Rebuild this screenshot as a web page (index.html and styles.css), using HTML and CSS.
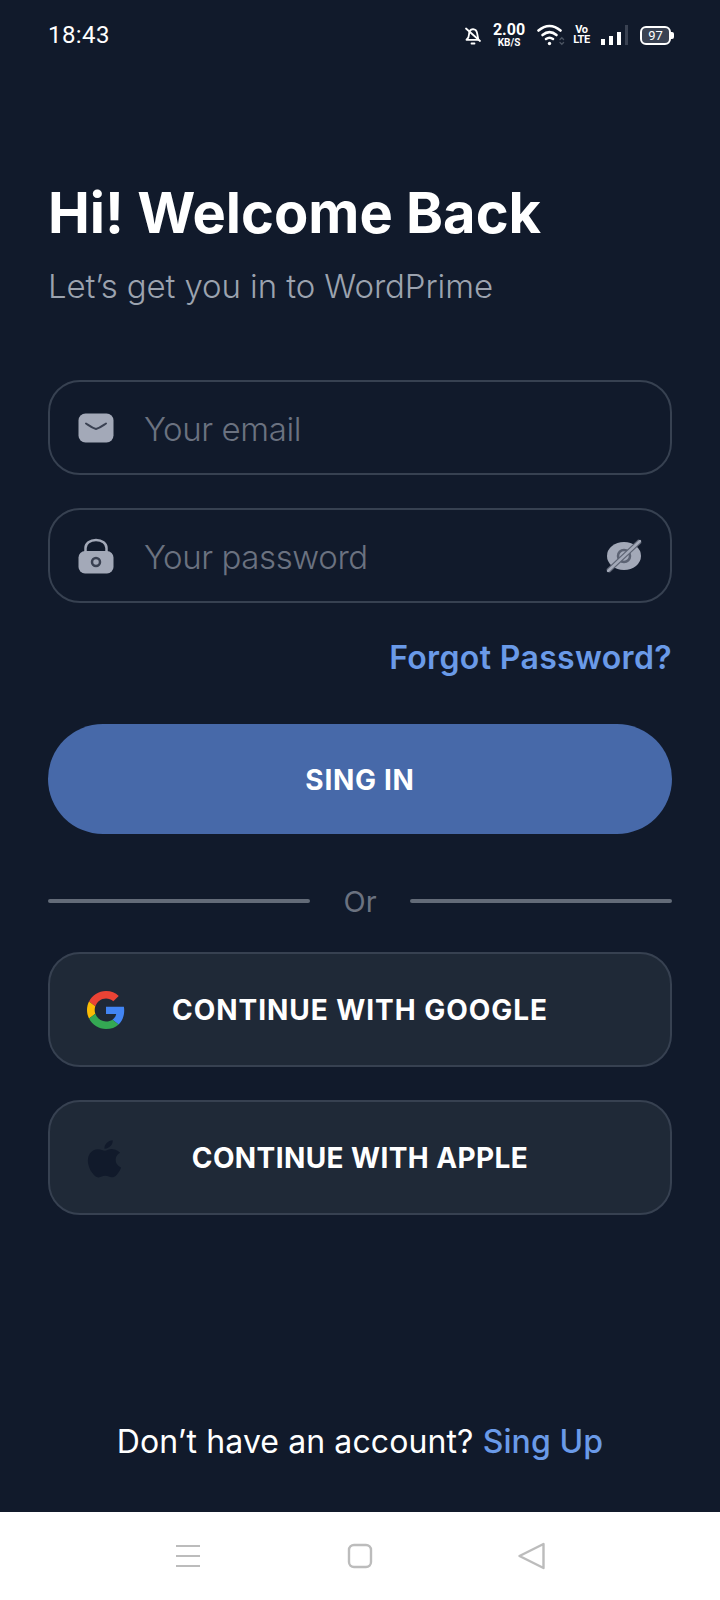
FILE: index.html
```html
<!DOCTYPE html>
<html lang="en">
<head>
    <meta charset="UTF-8">
    <meta name="viewport" content="width=device-width, initial-scale=1.0">
    <title>Sign in</title>
    <link rel="stylesheet" href="styles.css">
</head>
<body>
    <div class="screen">
        <!-- Status bar -->
        <div class="status-bar">
            <span class="clock">18:43</span>
            <div class="status-icons">
                <svg class="icon-bell" width="20" height="20" viewBox="0 0 20 20" fill="none" stroke="#fff" stroke-width="1.800" stroke-linecap="round" stroke-linejoin="round">
                    <path d="M3.500 14.800c1.800-1.500 2.500-3 2.500-5.300 0-2.900 1.600-5 4-5.300 2.200.2 3.700 1.800 4.100 4l1.300 6.600z"/>
                    <path d="M3 3.500l14 12.500"/>
                    <path d="M8.500 18.500h3"/>
                </svg>
                <div class="speed"><span class="speed-num">2.00</span><span class="speed-unit">KB/S</span></div>
                <svg class="icon-wifi" width="28" height="22" viewBox="0 0 28 22" fill="none" stroke="#fff" stroke-width="2.600" stroke-linecap="round">
                    <path d="M1.500 6.500c7-6 15-6 22 0"/>
                    <path d="M5.500 11c4.500-3.800 9.500-3.800 14 0"/>
                    <path d="M9 15c2.500-1.800 4.500-1.800 7 0"/>
                    <circle cx="12.500" cy="19.500" r="1.700" fill="#fff" stroke="none"/>
                    <path d="M23 15.500l1.800-1.800 1.800 1.800M23 18.500l1.800 1.800 1.800-1.800" stroke="#4a5361" stroke-width="1.300"/>
                </svg>
                <div class="volte"><span>Vo</span><span>LTE</span></div>
                <div class="signal">
                    <i class="bar-1"></i><i class="bar-2"></i><i class="bar-3"></i><i class="bar-4"></i>
                </div>
                <div class="battery"><span class="battery-level">97</span><i class="battery-tip"></i></div>
            </div>
        </div>

        <main class="content">
            <h1>Hi! Welcome Back</h1>
            <p class="subtitle">Let’s get you in to WordPrime</p>

            <div class="field field-email">
                <svg class="field-icon" width="36" height="30" viewBox="0 0 36 30">
                    <rect x="0.500" y="0.500" width="35" height="29" rx="7" fill="#a3a9b8"/>
                    <path d="M8 10.500c3 2 6 4.500 10 5.500 4-1 7-3.500 10-5.500" fill="none" stroke="#3a4152" stroke-width="2" stroke-linecap="round" stroke-linejoin="round"/>
                </svg>
                <span class="placeholder">Your email</span>
            </div>

            <div class="field field-password">
                <svg class="field-icon" width="36" height="36" viewBox="0 0 36 36">
                    <path d="M7.500 16V10c0-4.500 4.500-8 10.500-8s10.500 3.500 10.500 8v6" fill="none" stroke="#a3a9b8" stroke-width="2.500"/>
                    <rect x="0.500" y="13" width="35" height="22.500" rx="6.500" fill="#a3a9b8"/>
                    <circle cx="18" cy="24" r="4" fill="none" stroke="#3a4152" stroke-width="2.500"/>
                </svg>
                <span class="placeholder">Your password</span>
                <svg class="eye-icon" width="36" height="34" viewBox="0 0 36 34">
                    <ellipse cx="18" cy="17" rx="17" ry="14" fill="#a3a9b8"/>
                    <circle cx="18" cy="17" r="6" fill="none" stroke="#5c6373" stroke-width="2.500"/>
                    <path d="M2 32L34 2" stroke="#5c6373" stroke-width="5"/>
                    <path d="M2 32L34 2" stroke="#a3a9b8" stroke-width="2.500" stroke-linecap="round"/>
                </svg>
            </div>

            <div class="forgot-row"><a class="forgot">Forgot Password?</a></div>

            <button class="btn-signin">SING IN</button>

            <div class="divider"><i></i><span>Or</span><i></i></div>

            <button class="btn-social btn-google">
                <svg class="social-icon" width="38" height="38" viewBox="0 0 48 48">
                    <path fill="#EA4335" d="M24 9.500c3.500 0 6.700 1.200 9.200 3.600l6.900-6.900C35.900 2.400 30.500 0 24 0 14.600 0 6.500 5.400 2.600 13.200l8 6.200C12.500 13.700 17.800 9.500 24 9.500z"/>
                    <path fill="#4285F4" d="M47 24.500c0-1.600-.1-3.100-.4-4.500H24v9h12.900c-.6 3-2.200 5.500-4.700 7.200l7.700 6c4.500-4.200 7.100-10.300 7.100-17.700z"/>
                    <path fill="#FBBC05" d="M10.500 28.600c-.5-1.400-.8-3-.8-4.600s.3-3.200.8-4.600l-8-6.200C.9 16.500 0 20.100 0 24s.9 7.500 2.600 10.800l7.900-6.200z"/>
                    <path fill="#34A853" d="M24 48c6.500 0 11.900-2.100 15.900-5.800l-7.700-6c-2.200 1.500-4.900 2.300-8.200 2.300-6.200 0-11.500-4.200-13.400-9.900l-8 6.200C6.500 42.600 14.600 48 24 48z"/>
                </svg>
                <span>CONTINUE WITH GOOGLE</span>
            </button>

            <button class="btn-social btn-apple">
                <svg class="social-icon" width="46" height="42" viewBox="0 0 24 24" preserveAspectRatio="none">
                    <path fill="#111a2b" d="M17.050 12.540c-.03-2.700 2.200-4 2.300-4.060-1.260-1.840-3.210-2.090-3.900-2.120-1.660-.17-3.240.98-4.080.98-.84 0-2.140-.95-3.520-.93-1.810.03-3.480 1.050-4.410 2.670-1.880 3.260-.48 8.090 1.350 10.730.9 1.290 1.960 2.750 3.360 2.700 1.350-.05 1.860-.87 3.490-.87 1.630 0 2.090.87 3.520.84 1.450-.03 2.370-1.320 3.260-2.620 1.030-1.500 1.450-2.950 1.480-3.030-.03-.01-2.830-1.090-2.850-4.290zM14.370 4.630c.74-.9 1.240-2.150 1.110-3.400-1.070.04-2.370.71-3.140 1.610-.69.8-1.290 2.070-1.130 3.290 1.190.09 2.420-.61 3.160-1.500z"/>
                </svg>
                <span>CONTINUE WITH APPLE</span>
            </button>
        </main>

        <p class="signup">Don’t have an account? <a>Sing Up</a></p>

        <!-- Android nav bar -->
        <div class="nav-bar">
            <svg width="24" height="22" viewBox="0 0 24 22" stroke="#bcbcbc" stroke-width="2" fill="none">
                <path d="M0 1h24M0 11h24M0 21h24"/>
            </svg>
            <svg class="nav-home" width="26" height="26" viewBox="0 0 26 26" stroke="#bcbcbc" stroke-width="2.400" fill="none">
                <rect x="2" y="2" width="22" height="22" rx="5"/>
            </svg>
            <svg class="nav-back" width="27" height="28" viewBox="0 0 27 28" stroke="#bcbcbc" stroke-width="2.400" fill="none" stroke-linejoin="round">
                <path d="M25.500 2v24L1.500 14z"/>
            </svg>
        </div>
    </div>
</body>
</html>
```

FILE: styles.css
```css
* {
    box-sizing: border-box;
}

body {
    margin: 0;
    font-family: "Inter", "Noto Sans", sans-serif;
    background-color: #111a2b;
    color: #fff;
}

.screen {
    width: 720px;
    height: 1600px;
    display: flex;
    flex-direction: column;
    background-color: #111a2b;
    overflow: hidden;
}

/* Status bar */
.status-bar {
    height: 70px;
    padding: 0 46px 0 48px;
    display: flex;
    justify-content: space-between;
    align-items: center;
}

.clock {
    font-family: "Roboto", sans-serif;
    font-size: 24px;
    letter-spacing: 0.4px;
}

.status-icons {
    display: flex;
    align-items: center;
}

.icon-bell {
    margin-right: 10px;
}

.speed {
    display: flex;
    flex-direction: column;
    align-items: center;
    width: 32px;
    font-family: "Roboto", sans-serif;
    font-weight: 700;
    margin-right: 12px;
}

.speed-num {
    font-size: 16px;
    line-height: 15px;
}

.speed-unit {
    font-size: 10px;
    line-height: 11px;
}

.volte {
    display: flex;
    flex-direction: column;
    align-items: center;
    width: 15px;
    margin: 0 12px 0 9px;
    font-family: "Roboto", sans-serif;
    font-size: 11px;
    font-weight: 700;
    line-height: 10px;
    letter-spacing: -0.4px;
}

.signal {
    display: flex;
    align-items: flex-end;
    gap: 4px;
    height: 20px;
    margin-right: 12px;
}

.signal i {
    width: 4px;
    background-color: #fff;
}

.signal .bar-1 { height: 6px; }
.signal .bar-2 { height: 9px; }
.signal .bar-3 { height: 13px; }
.signal .bar-4 { width: 3px; height: 20px; background-color: #3a4252; }

.battery {
    position: relative;
    width: 31px;
    height: 19px;
    margin-right: 3px;
    border: 2px solid #fff;
    border-radius: 6px;
    background-color: #3a4252;
    display: flex;
    align-items: center;
    justify-content: center;
}

.battery-level {
    font-family: "Roboto", sans-serif;
    font-size: 13px;
    line-height: 15px;
}

.battery-tip {
    position: absolute;
    right: -5px;
    top: 4px;
    width: 3px;
    height: 7px;
    background-color: #fff;
    border-radius: 0 2px 2px 0;
}

/* Main content */
.content {
    padding: 0 48px;
    display: flex;
    flex-direction: column;
}

h1 {
    margin: 110px 0 0;
    font-size: 56px;
    line-height: 66px;
    font-weight: 700;
}

.subtitle {
    margin: 20px 0 0;
    font-size: 33px;
    line-height: 40px;
    font-weight: 300;
    color: #9ca3af;
    letter-spacing: -0.1px;
}

.field {
    height: 95px;
    margin-top: 33px;
    padding: 0 28px;
    display: flex;
    align-items: center;
    border: 2px solid #374151;
    border-radius: 32px;
}

.field-email {
    margin-top: 74px;
}

.field-icon {
    flex: none;
    margin-right: 30px;
}

.placeholder {
    flex: 1;
    padding-top: 2px;
    font-size: 33px;
    font-weight: 300;
    color: #6b7280;
    letter-spacing: -0.4px;
}

.forgot-row {
    margin-top: 35px;
    display: flex;
    justify-content: flex-end;
}

.forgot {
    font-size: 32px;
    line-height: 40px;
    font-weight: 600;
    color: #6a9ae8;
    letter-spacing: 0.35px;
}

button {
    font-family: inherit;
    color: #fff;
    cursor: pointer;
}

.btn-signin {
    height: 110px;
    margin-top: 46px;
    padding-top: 2px;
    border: none;
    border-radius: 55px;
    background-color: #4769a9;
    font-size: 28px;
    font-weight: 700;
    letter-spacing: 0.7px;
}

.divider {
    height: 40px;
    margin-top: 46px;
    display: flex;
    align-items: center;
    justify-content: space-between;
}

.divider i {
    width: 262px;
    height: 4px;
    margin-top: 2px;
    background-color: #636b78;
    border-radius: 2px;
}

.divider span {
    padding-top: 2px;
    font-size: 29px;
    color: #6b7280;
    font-weight: 400;
}

.btn-social {
    position: relative;
    height: 115px;
    margin-top: 32px;
    padding-top: 2px;
    border: 2px solid #374151;
    border-radius: 32px;
    background-color: #1f2937;
    font-size: 28px;
    font-weight: 700;
    display: flex;
    align-items: center;
    justify-content: center;
}

.btn-google {
    letter-spacing: 0.95px;
}

.btn-apple {
    margin-top: 33px;
    letter-spacing: 0.4px;
}

.social-icon {
    position: absolute;
    left: 37px;
    top: 37px;
}

.btn-apple .social-icon {
    left: 33px;
    top: 36px;
}

.signup {
    margin: 207px 0 0;
    text-align: center;
    font-size: 32px;
    line-height: 40px;
    color: #fff;
    letter-spacing: 0.1px;
}

.signup a {
    color: #6a9ae8;
    font-weight: 500;
}

/* Android nav bar */
.nav-bar {
    margin-top: auto;
    height: 88px;
    padding-left: 176px;
    display: flex;
    align-items: center;
    background-color: #fff;
}

.nav-home {
    margin-left: 147px;
}

.nav-back {
    margin-left: 145px;
}
```
